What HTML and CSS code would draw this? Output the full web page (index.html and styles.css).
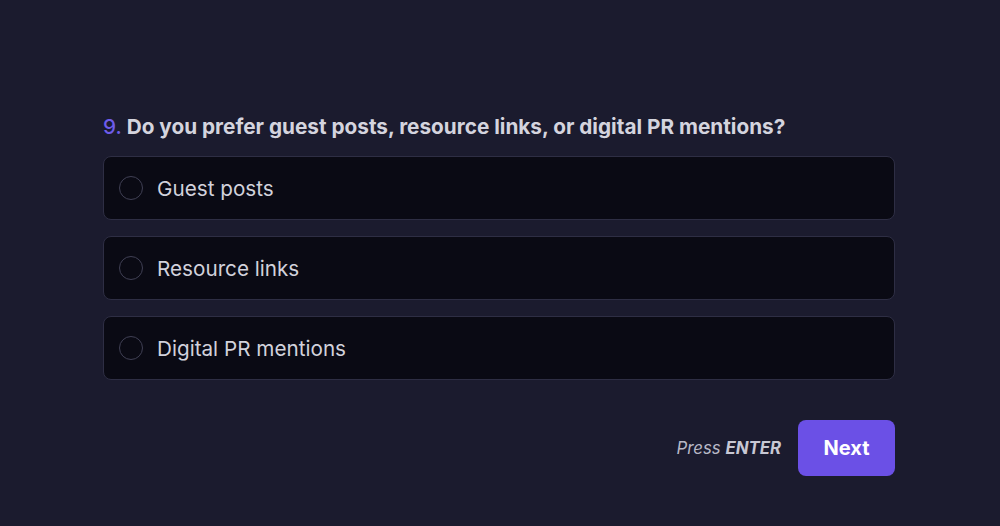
FILE: index.html
```html
<!DOCTYPE html>
<html>
<head>
<meta charset="utf-8">
<link rel="stylesheet" href="styles.css">
</head>
<body>
<main class="page">
  <section class="quiz">
    <h2 class="question"><span class="num">9.</span> Do you prefer guest posts, resource links, or digital PR mentions?</h2>
    <div class="options">
      <label class="option"><span class="radio"></span><span class="label">Guest posts</span></label>
      <label class="option"><span class="radio"></span><span class="label">Resource links</span></label>
      <label class="option"><span class="radio"></span><span class="label">Digital PR mentions</span></label>
    </div>
    <div class="actions">
      <span class="hint">Press <b>ENTER</b></span>
      <button class="next">Next</button>
    </div>
  </section>
</main>
</body>
</html>
```
FILE: styles.css
```css
html, body {
  margin: 0;
  padding: 0;
  background: #1b1b2e;
  font-family: Inter, "Noto Sans", sans-serif;
}
.page {
  width: 1000px;
  height: 526px;
  display: flex;
  justify-content: flex-start;
}
.quiz {
  width: 792px;
  margin-left: 103px;
  padding-top: 113px;
}
.question {
  margin: 0 0 16px 0;
  font-size: 20.75px;
  line-height: 27px;
  font-weight: 700;
  color: #d4d4de;
}
.num {
  color: #6e5ce9;
  font-weight: 500;
}
.options {
  display: flex;
  flex-direction: column;
  gap: 16px;
}
.option {
  display: flex;
  align-items: center;
  height: 62px;
  border: 1px solid #2e2e44;
  border-radius: 8px;
  background: #0a0a14;
  padding: 0 15px;
  gap: 14px;
}
.radio {
  width: 24px;
  height: 24px;
  border: 1.5px solid #404054;
  border-radius: 50%;
  box-sizing: border-box;
  flex: none;
}
.label {
  font-size: 20.7px;
  color: #d2d2dc;
}
.actions {
  display: flex;
  justify-content: flex-end;
  align-items: center;
  gap: 17px;
  margin-top: 40px;
}
.hint {
  font-style: italic;
  font-size: 16.8px;
  color: #b8b8c6;
}
.hint b {
  font-weight: 700;
  color: #c8c8d4;
}
.next {
  width: 97px;
  height: 56px;
  border: none;
  border-radius: 8px;
  background: #6b50e6;
  color: #ffffff;
  font-family: Inter, "Noto Sans", sans-serif;
  font-size: 20px;
  font-weight: 700;
}
```
